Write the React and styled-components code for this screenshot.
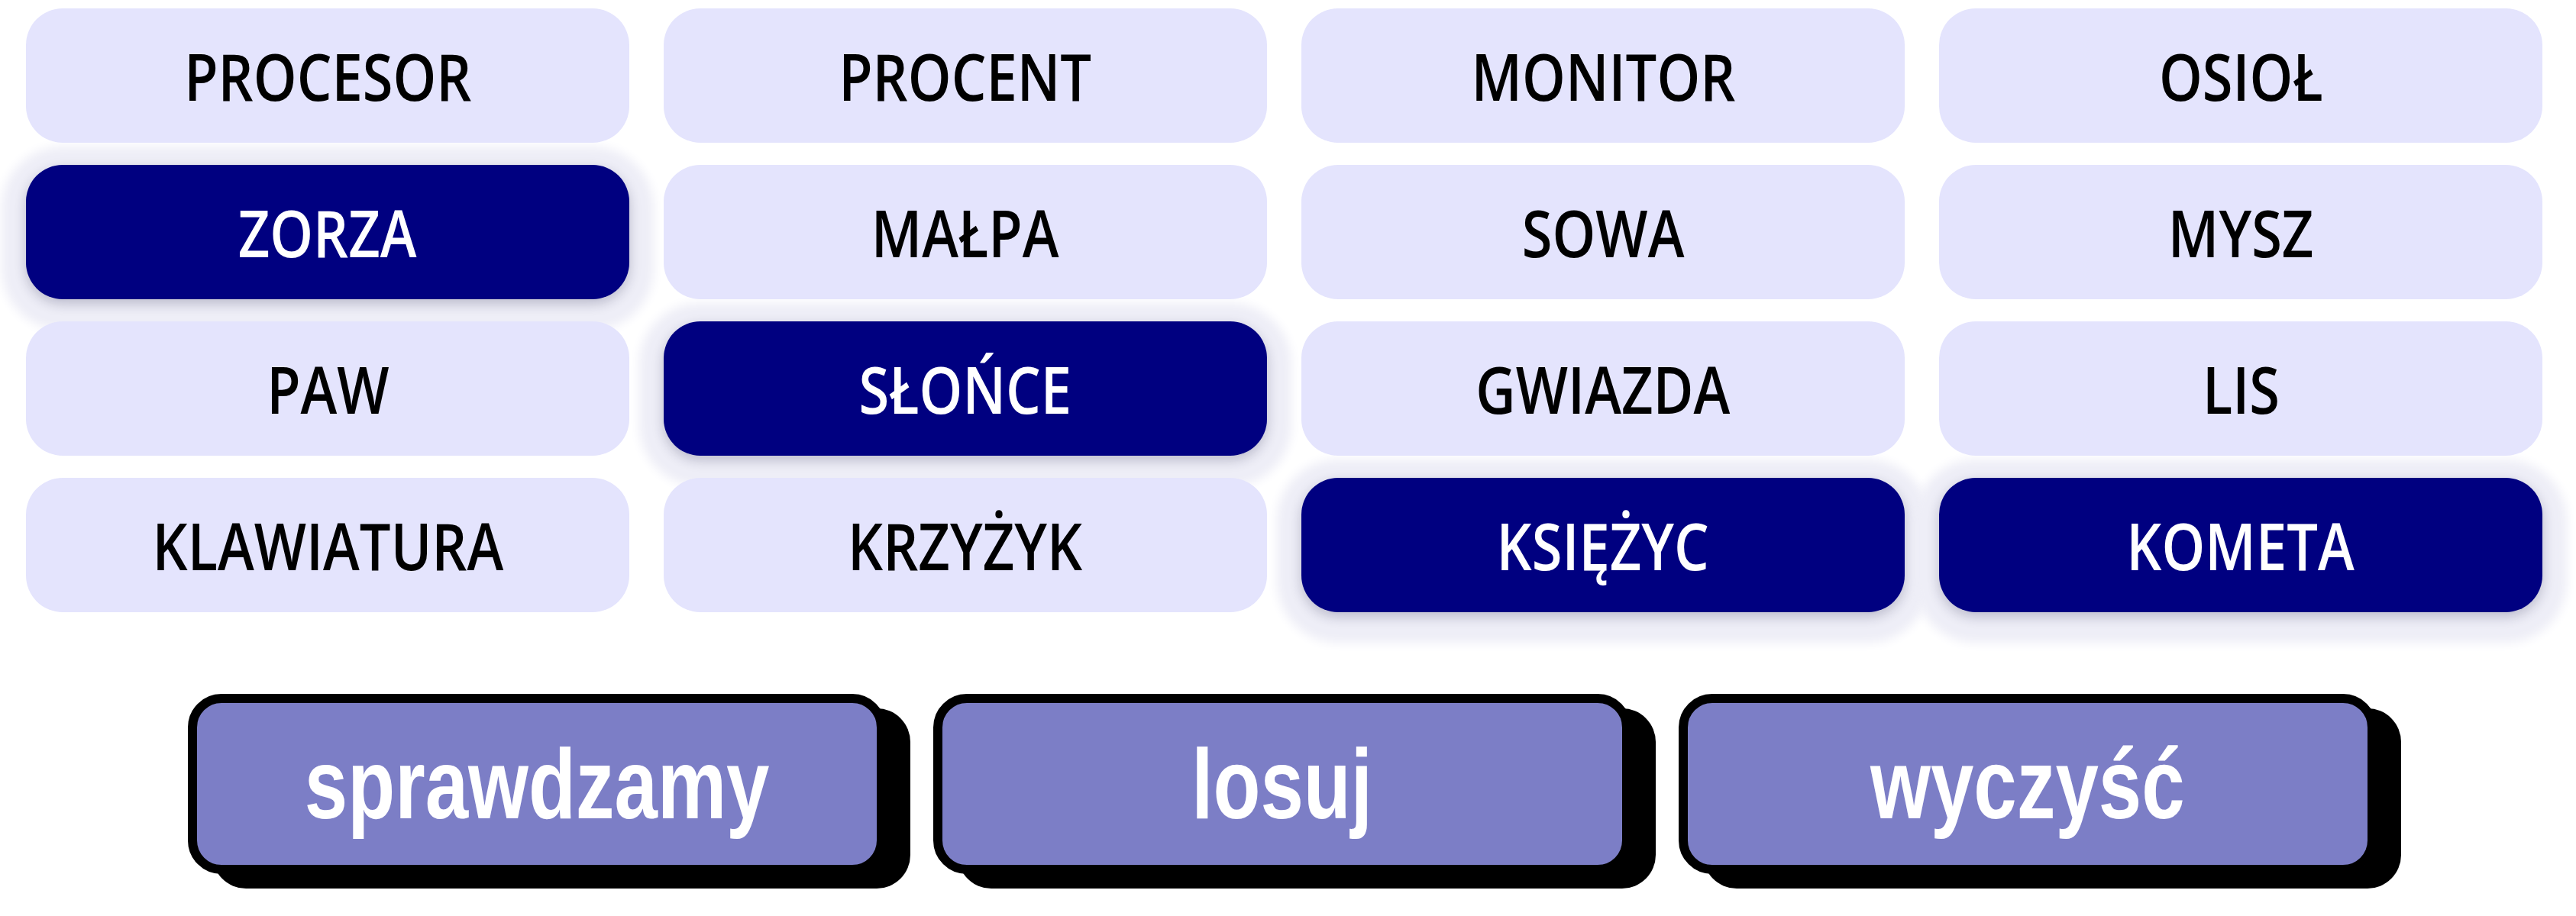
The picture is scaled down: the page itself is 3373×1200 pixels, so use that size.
import React from "react";
import styled, { createGlobalStyle } from "styled-components";

const Global = createGlobalStyle`
  html, body { margin: 0; padding: 0; background: #ffffff; }
  body { font-family: "Open Sans", "Noto Sans", sans-serif; }
`;

const Page = styled.div`
  width: 3373px;
  height: 1200px;
  box-sizing: border-box;
  padding: 11px 0 0 34px;
  overflow: hidden;
`;

const Board = styled.div`
  display: grid;
  grid-template-columns: repeat(4, 790px);
  grid-auto-rows: 176px;
  column-gap: 45px;
  row-gap: 29px;
`;

const Tile = styled.div`
  display: flex;
  align-items: center;
  justify-content: center;
  border-radius: 48px;
  background: ${(p) => (p.$selected ? "#000080" : "#e4e4fd")};
  color: ${(p) => (p.$selected ? "#ffffff" : "#000000")};
  box-shadow: ${(p) =>
    p.$selected
      ? "0 6px 16px rgba(30, 30, 70, 0.24), 0 8px 14px 32px rgba(238, 238, 247, 1)"
      : "none"};
  position: relative;
  z-index: ${(p) => (p.$selected ? 0 : 1)};
`;

const TileLabel = styled.span`
  display: inline-block;
  font-family: "Open Sans", "Noto Sans", sans-serif;
  font-size: 85px;
  font-weight: 600;
  line-height: 1;
  white-space: nowrap;
  transform: scaleX(0.85);
`;

const Actions = styled.div`
  display: flex;
  gap: 62px;
  margin-top: 107px;
  padding-left: 212px;
`;

const ActionButton = styled.button`
  width: 914px;
  height: 236px;
  box-sizing: border-box;
  border: 12px solid #000000;
  border-radius: 44px;
  background: #7c7ec6;
  box-shadow: 32px 19px 0 #000000;
  display: flex;
  align-items: center;
  justify-content: center;
  padding: 0;
  cursor: pointer;
`;

const ActionLabel = styled.span`
  display: inline-block;
  font-family: "Liberation Sans", Arial, sans-serif;
  font-weight: 700;
  font-size: 130px;
  line-height: 1;
  color: #ffffff;
  white-space: nowrap;
  transform: scaleX(0.78);
`;

const words = [
  ["PROCESOR", false],
  ["PROCENT", false],
  ["MONITOR", false],
  ["OSIOŁ", false],
  ["ZORZA", true],
  ["MAŁPA", false],
  ["SOWA", false],
  ["MYSZ", false],
  ["PAW", false],
  ["SŁOŃCE", true],
  ["GWIAZDA", false],
  ["LIS", false],
  ["KLAWIATURA", false],
  ["KRZYŻYK", false],
  ["KSIĘŻYC", true],
  ["KOMETA", true],
];

const actions = ["sprawdzamy", "losuj", "wyczyść"];

export default function App() {
  return (
    <>
      <Global />
      <Page>
        <Board>
          {words.map(([w, sel]) => (
            <Tile key={w} $selected={sel}>
              <TileLabel>{w}</TileLabel>
            </Tile>
          ))}
        </Board>
        <Actions>
          {actions.map((a) => (
            <ActionButton key={a}>
              <ActionLabel>{a}</ActionLabel>
            </ActionButton>
          ))}
        </Actions>
      </Page>
    </>
  );
}
